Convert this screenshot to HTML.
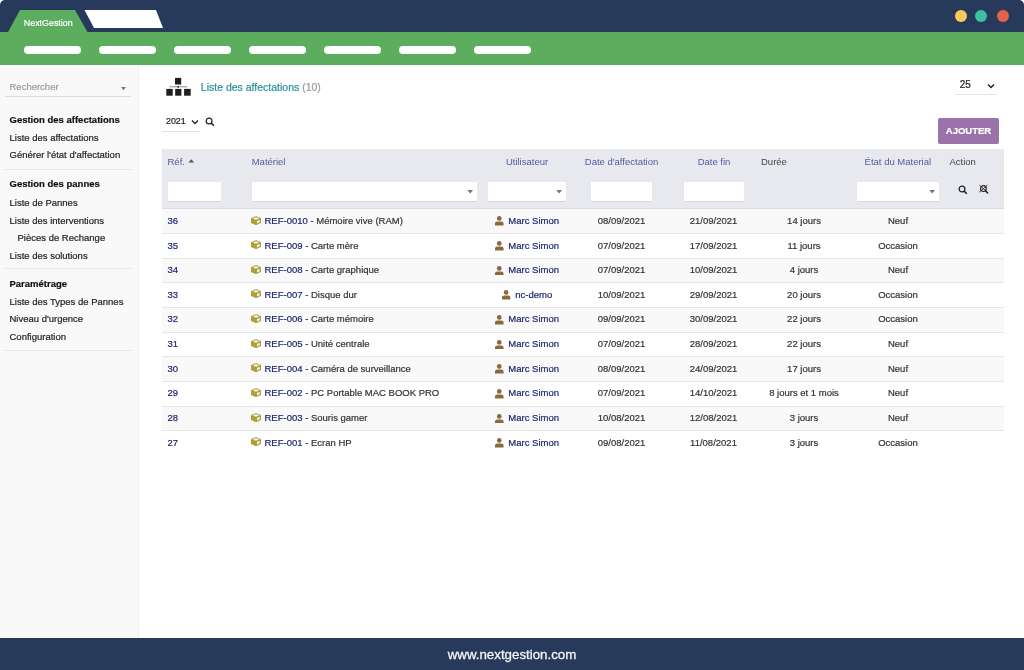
<!DOCTYPE html>
<html><head><meta charset="utf-8">
<style>
*{margin:0;padding:0;box-sizing:border-box}
html,body{width:1024px;height:670px;overflow:hidden;background:#fff}
body{font-family:"Liberation Sans",sans-serif;font-size:9.5px;color:#333;position:relative}
#frame *{-webkit-text-stroke:0.2px currentColor}
.abs{position:absolute}
#frame{position:absolute;left:0;top:0;width:1024px;height:670px;border-radius:5px 5px 0 0;overflow:hidden;background:#fff;will-change:transform}
#top{position:absolute;left:0;top:0;width:1024px;height:33px;background:#273a5c}
#green{position:absolute;left:0;top:32px;width:1024px;height:33px;background:#5cae5e}
.pill{position:absolute;top:46px;height:8px;width:57px;border-radius:4px;background:#fff}
.dot{position:absolute;top:10px;width:12px;height:12px;border-radius:50%}
#side{position:absolute;left:0;top:65px;width:139px;height:573px;background:#f9f9f9;border-right:1px solid #eeeeee}
#side:before{content:"";position:absolute;left:0;top:0;width:138px;height:3px;background:#fff}
#foot{position:absolute;left:0;top:638px;width:1024px;height:32px;background:#273a5c;color:#f4f4f4;font-size:13.3px;font-weight:normal;text-align:center;line-height:34px;-webkit-text-stroke:0.3px #f4f4f4}
.sb{position:absolute;left:9.5px;white-space:nowrap;color:#222}
.sbh{font-weight:bold;color:#111}
.sep{position:absolute;left:5px;width:126px;height:1px;background:#e6e6e6}
table{position:absolute;left:162px;top:149px;width:842px;border-collapse:collapse}
.th{position:absolute;top:149px;left:162px;width:842px;height:60px;background:#e8e9ee;border-bottom:1px solid #dcdde2}
.hl{position:absolute;top:155.7px;color:#535ba0;white-space:nowrap;-webkit-text-stroke:0px currentColor !important}
.inp{position:absolute;top:182px;height:18.6px;background:#fff;box-shadow:0 0.5px 1px rgba(0,0,0,0.08)}
.caret{position:absolute;top:8px;right:3.5px}
.row{position:absolute;left:162px;width:842px;height:24.6px;border-bottom:1px solid #e6e6e6}
.row.odd{background:#f9f9f9}
.row.last{border-bottom:none}
.c{position:absolute;top:5.4px;white-space:nowrap;color:#333}
.ref{color:#1e2670}
.ctr{transform:translateX(-50%)}
</style></head><body>
<div id="frame">
 <div id="top"></div>
 <svg class="abs" style="left:0;top:0" width="200" height="33">
  <polygon points="7.5,33 20,10 75,10 88,33" fill="#5cae5e"/>
  <polygon points="84.5,10 156,10 163,28 94,28" fill="#fff"/>
 </svg>
 <div class="abs" style="left:23.8px;top:17.5px;color:#fff;font-size:8.9px;white-space:nowrap">NextGestion</div>
 <div class="dot" style="left:954.6px;background:#fcc95a"></div>
 <div class="dot" style="left:975.3px;background:#3cbfa3"></div>
 <div class="dot" style="left:996.6px;background:#e9604a"></div>
 <div id="green"></div>
 <div class="pill" style="left:23.5px"></div>
 <div class="pill" style="left:98.5px"></div>
 <div class="pill" style="left:173.5px"></div>
 <div class="pill" style="left:248.5px"></div>
 <div class="pill" style="left:323.5px"></div>
 <div class="pill" style="left:398.5px"></div>
 <div class="pill" style="left:473.5px"></div>

 <div id="side">
  <div class="sb" style="top:16px;color:#9a9a9a">Rechercher</div>
  <svg class="abs" style="left:120.6px;top:21.5px" width="6" height="4" viewBox="0 0 6 4"><polygon points="0,0 5,0 2.5,3.3" fill="#777"/></svg>
  <div class="sep" style="top:31px;background:#dcdcdc"></div>
  <div class="sb sbh" style="top:49px">Gestion des affectations</div>
  <div class="sb" style="top:67px">Liste des affectations</div>
  <div class="sb" style="top:84px">Générer l'état d'affectation</div>
  <div class="sep" style="top:104px"></div>
  <div class="sb sbh" style="top:113px">Gestion des pannes</div>
  <div class="sb" style="top:132px">Liste de Pannes</div>
  <div class="sb" style="top:149.5px">Liste des interventions</div>
  <div class="sb" style="top:166.5px;left:17.5px">Pièces de Rechange</div>
  <div class="sb" style="top:184.5px">Liste des solutions</div>
  <div class="sep" style="top:203px"></div>
  <div class="sb sbh" style="top:213px">Paramétrage</div>
  <div class="sb" style="top:231px">Liste des Types de Pannes</div>
  <div class="sb" style="top:248px">Niveau d'urgence</div>
  <div class="sb" style="top:266px">Configuration</div>
  <div class="sep" style="top:285px"></div>
 </div>

 <!-- content header -->
 <svg class="abs" style="left:165px;top:77px" width="27" height="20" viewBox="0 0 27 20">
  <rect x="10" y="0.9" width="6.2" height="6.6" fill="#1e1e1e"/>
  <rect x="4.4" y="9.3" width="17.8" height="1" fill="#8a8a8a"/>
  <circle cx="13.2" cy="9.8" r="0.9" fill="#222"/>
  <rect x="1.3" y="11.9" width="6.4" height="6.8" fill="#1e1e1e"/>
  <rect x="10.2" y="11.9" width="6.2" height="6.8" fill="#1e1e1e"/>
  <rect x="19.1" y="11.9" width="6.6" height="6.8" fill="#1e1e1e"/>
 </svg>
 <div class="abs" style="left:200.8px;top:81px;font-size:10.5px;color:#27909a;white-space:nowrap">Liste des affectations <span style="color:#999">(10)</span></div>

 <div class="abs" style="left:955px;top:76px;width:41.5px;height:19px;border-bottom:1px solid #e3e3e3">
  <div class="abs" style="left:4.7px;top:3.3px;font-size:10px;color:#222">25</div>
  <svg class="abs" style="left:32px;top:6.5px" width="8" height="6"><polyline points="1,1.5 4,4.5 7,1.5" fill="none" stroke="#222" stroke-width="1.5"/></svg>
 </div>

 <div class="abs" style="left:162px;top:112px;width:38px;height:20px;border-bottom:1px solid #e3e3e3">
  <div class="abs" style="left:4px;top:4.4px;font-size:8.9px;color:#222">2021</div>
  <svg class="abs" style="left:28.8px;top:7.2px" width="8" height="6"><polyline points="1,1.5 4,4.5 7,1.5" fill="none" stroke="#222" stroke-width="1.3"/></svg>
 </div>
 <svg class="abs" style="left:205px;top:117px" width="10" height="10" viewBox="0 0 10 10"><circle cx="4.1" cy="4" r="2.9" fill="none" stroke="#222" stroke-width="1.25"/><line x1="6.2" y1="6.1" x2="8.9" y2="8.8" stroke="#222" stroke-width="1.5"/></svg>

 <div class="abs" style="left:938.2px;top:118px;width:60.6px;height:26px;background:#9b72aa;border-radius:2px;color:#fff;font-weight:bold;font-size:9.5px;text-align:center;line-height:26px">AJOUTER</div>

 <!-- table header -->
 <div class="th"></div>
 <div class="hl" style="left:167.5px">Réf. <svg width="7" height="4" viewBox="0 0 7 4" style="vertical-align:1.5px"><polygon points="0.4,3.6 6.2,3.6 3.3,0.3" fill="#555"/></svg></div>
 <div class="hl" style="left:251.7px">Matériel</div>
 <div class="hl ctr" style="left:527px">Utilisateur</div>
 <div class="hl ctr" style="left:621.5px">Date d'affectation</div>
 <div class="hl ctr" style="left:714px">Date fin</div>
 <div class="hl" style="left:761px;color:#444">Durée</div>
 <div class="hl" style="left:864.6px">État du Material</div>
 <div class="hl" style="left:949.5px;color:#444">Action</div>

 <div class="inp" style="left:167.5px;width:53.5px"></div>
 <div class="inp" style="left:251.5px;width:225.5px"><svg class="caret" width="7" height="4" viewBox="0 0 7 4"><polygon points="0.3,0 6.1,0 3.2,3.6" fill="#777"/></svg></div>
 <div class="inp" style="left:488px;width:78px"><svg class="caret" width="7" height="4" viewBox="0 0 7 4"><polygon points="0.3,0 6.1,0 3.2,3.6" fill="#777"/></svg></div>
 <div class="inp" style="left:591.3px;width:60.7px"></div>
 <div class="inp" style="left:683.6px;width:60.6px"></div>
 <div class="inp" style="left:857px;width:82px"><svg class="caret" width="7" height="4" viewBox="0 0 7 4"><polygon points="0.3,0 6.1,0 3.2,3.6" fill="#777"/></svg></div>
 <svg class="abs" style="left:958px;top:184.5px" width="11" height="10" viewBox="0 0 11 10"><circle cx="4" cy="4" r="2.9" fill="none" stroke="#222" stroke-width="1.25"/><line x1="6.1" y1="6.1" x2="8.8" y2="8.8" stroke="#222" stroke-width="1.5"/></svg>
 <svg class="abs" style="left:978px;top:184px" width="12" height="12" viewBox="0 0 12 12"><circle cx="5.4" cy="4.6" r="2.9" fill="none" stroke="#222" stroke-width="1.2"/><line x1="7.5" y1="6.7" x2="10" y2="9.4" stroke="#222" stroke-width="1.4"/><line x1="1.5" y1="1.2" x2="9.3" y2="8.2" stroke="#222" stroke-width="0.9"/><line x1="9.3" y1="1.2" x2="1.3" y2="8.2" stroke="#222" stroke-width="0.9"/></svg>

 <div id="rows"><div class="row odd" style="top:209.50px;box-shadow:0 -1px 0 #f9f9f9"><div class="c ref" style="left:5.5px">36</div><svg class="abs" style="left:89px;top:6px" width="10" height="9.2" viewBox="0 0 10 9.2"><path d="M5 0 L10 2.2 L10 7 L5 9.2 L0 7 L0 2.2 Z" fill="#ae9f3a"/><path d="M1.8 2.4 L5 1.1 L8.2 2.4 L5 3.8 Z" fill="#f6f3e4"/><path d="M6 4.9 L8.7 3.7 L8.7 6.3 L6 7.6 Z" fill="#f6f3e4"/></svg><div class="c" style="left:102.5px"><span class="ref">REF-0010</span> - Mémoire vive (RAM)</div><div class="c ctr" style="left:365px"><span><svg width="8.6" height="9.6" viewBox="0 0 8.6 9.6" style="vertical-align:-2.2px;margin-right:4.8px"><circle cx="4.3" cy="2.4" r="2.35" fill="#8a6a3c"/><path d="M0 9.6 L0 7.6 Q0 5.6 2.3 5.6 L6.3 5.6 Q8.6 5.6 8.6 7.6 L8.6 9.6 Z" fill="#8a6a3c"/></svg></span><span class="ref">Marc Simon</span></div><div class="c ctr" style="left:459.5px">08/09/2021</div><div class="c ctr" style="left:551.5px">21/09/2021</div><div class="c ctr" style="left:642px">14 jours</div><div class="c ctr" style="left:736px">Neuf</div></div>
<div class="row" style="top:234.15px"><div class="c ref" style="left:5.5px">35</div><svg class="abs" style="left:89px;top:6px" width="10" height="9.2" viewBox="0 0 10 9.2"><path d="M5 0 L10 2.2 L10 7 L5 9.2 L0 7 L0 2.2 Z" fill="#ae9f3a"/><path d="M1.8 2.4 L5 1.1 L8.2 2.4 L5 3.8 Z" fill="#f6f3e4"/><path d="M6 4.9 L8.7 3.7 L8.7 6.3 L6 7.6 Z" fill="#f6f3e4"/></svg><div class="c" style="left:102.5px"><span class="ref">REF-009</span> - Carte mère</div><div class="c ctr" style="left:365px"><span><svg width="8.6" height="9.6" viewBox="0 0 8.6 9.6" style="vertical-align:-2.2px;margin-right:4.8px"><circle cx="4.3" cy="2.4" r="2.35" fill="#8a6a3c"/><path d="M0 9.6 L0 7.6 Q0 5.6 2.3 5.6 L6.3 5.6 Q8.6 5.6 8.6 7.6 L8.6 9.6 Z" fill="#8a6a3c"/></svg></span><span class="ref">Marc Simon</span></div><div class="c ctr" style="left:459.5px">07/09/2021</div><div class="c ctr" style="left:551.5px">17/09/2021</div><div class="c ctr" style="left:642px">11 jours</div><div class="c ctr" style="left:736px">Occasion</div></div>
<div class="row odd" style="top:258.80px"><div class="c ref" style="left:5.5px">34</div><svg class="abs" style="left:89px;top:6px" width="10" height="9.2" viewBox="0 0 10 9.2"><path d="M5 0 L10 2.2 L10 7 L5 9.2 L0 7 L0 2.2 Z" fill="#ae9f3a"/><path d="M1.8 2.4 L5 1.1 L8.2 2.4 L5 3.8 Z" fill="#f6f3e4"/><path d="M6 4.9 L8.7 3.7 L8.7 6.3 L6 7.6 Z" fill="#f6f3e4"/></svg><div class="c" style="left:102.5px"><span class="ref">REF-008</span> - Carte graphique</div><div class="c ctr" style="left:365px"><span><svg width="8.6" height="9.6" viewBox="0 0 8.6 9.6" style="vertical-align:-2.2px;margin-right:4.8px"><circle cx="4.3" cy="2.4" r="2.35" fill="#8a6a3c"/><path d="M0 9.6 L0 7.6 Q0 5.6 2.3 5.6 L6.3 5.6 Q8.6 5.6 8.6 7.6 L8.6 9.6 Z" fill="#8a6a3c"/></svg></span><span class="ref">Marc Simon</span></div><div class="c ctr" style="left:459.5px">07/09/2021</div><div class="c ctr" style="left:551.5px">10/09/2021</div><div class="c ctr" style="left:642px">4 jours</div><div class="c ctr" style="left:736px">Neuf</div></div>
<div class="row" style="top:283.45px"><div class="c ref" style="left:5.5px">33</div><svg class="abs" style="left:89px;top:6px" width="10" height="9.2" viewBox="0 0 10 9.2"><path d="M5 0 L10 2.2 L10 7 L5 9.2 L0 7 L0 2.2 Z" fill="#ae9f3a"/><path d="M1.8 2.4 L5 1.1 L8.2 2.4 L5 3.8 Z" fill="#f6f3e4"/><path d="M6 4.9 L8.7 3.7 L8.7 6.3 L6 7.6 Z" fill="#f6f3e4"/></svg><div class="c" style="left:102.5px"><span class="ref">REF-007</span> - Disque dur</div><div class="c ctr" style="left:365px"><span><svg width="8.6" height="9.6" viewBox="0 0 8.6 9.6" style="vertical-align:-2.2px;margin-right:4.8px"><circle cx="4.3" cy="2.4" r="2.35" fill="#8a6a3c"/><path d="M0 9.6 L0 7.6 Q0 5.6 2.3 5.6 L6.3 5.6 Q8.6 5.6 8.6 7.6 L8.6 9.6 Z" fill="#8a6a3c"/></svg></span><span class="ref">nc-demo</span></div><div class="c ctr" style="left:459.5px">10/09/2021</div><div class="c ctr" style="left:551.5px">29/09/2021</div><div class="c ctr" style="left:642px">20 jours</div><div class="c ctr" style="left:736px">Occasion</div></div>
<div class="row odd" style="top:308.10px"><div class="c ref" style="left:5.5px">32</div><svg class="abs" style="left:89px;top:6px" width="10" height="9.2" viewBox="0 0 10 9.2"><path d="M5 0 L10 2.2 L10 7 L5 9.2 L0 7 L0 2.2 Z" fill="#ae9f3a"/><path d="M1.8 2.4 L5 1.1 L8.2 2.4 L5 3.8 Z" fill="#f6f3e4"/><path d="M6 4.9 L8.7 3.7 L8.7 6.3 L6 7.6 Z" fill="#f6f3e4"/></svg><div class="c" style="left:102.5px"><span class="ref">REF-006</span> - Carte mémoire</div><div class="c ctr" style="left:365px"><span><svg width="8.6" height="9.6" viewBox="0 0 8.6 9.6" style="vertical-align:-2.2px;margin-right:4.8px"><circle cx="4.3" cy="2.4" r="2.35" fill="#8a6a3c"/><path d="M0 9.6 L0 7.6 Q0 5.6 2.3 5.6 L6.3 5.6 Q8.6 5.6 8.6 7.6 L8.6 9.6 Z" fill="#8a6a3c"/></svg></span><span class="ref">Marc Simon</span></div><div class="c ctr" style="left:459.5px">09/09/2021</div><div class="c ctr" style="left:551.5px">30/09/2021</div><div class="c ctr" style="left:642px">22 jours</div><div class="c ctr" style="left:736px">Occasion</div></div>
<div class="row" style="top:332.75px"><div class="c ref" style="left:5.5px">31</div><svg class="abs" style="left:89px;top:6px" width="10" height="9.2" viewBox="0 0 10 9.2"><path d="M5 0 L10 2.2 L10 7 L5 9.2 L0 7 L0 2.2 Z" fill="#ae9f3a"/><path d="M1.8 2.4 L5 1.1 L8.2 2.4 L5 3.8 Z" fill="#f6f3e4"/><path d="M6 4.9 L8.7 3.7 L8.7 6.3 L6 7.6 Z" fill="#f6f3e4"/></svg><div class="c" style="left:102.5px"><span class="ref">REF-005</span> - Unité centrale</div><div class="c ctr" style="left:365px"><span><svg width="8.6" height="9.6" viewBox="0 0 8.6 9.6" style="vertical-align:-2.2px;margin-right:4.8px"><circle cx="4.3" cy="2.4" r="2.35" fill="#8a6a3c"/><path d="M0 9.6 L0 7.6 Q0 5.6 2.3 5.6 L6.3 5.6 Q8.6 5.6 8.6 7.6 L8.6 9.6 Z" fill="#8a6a3c"/></svg></span><span class="ref">Marc Simon</span></div><div class="c ctr" style="left:459.5px">07/09/2021</div><div class="c ctr" style="left:551.5px">28/09/2021</div><div class="c ctr" style="left:642px">22 jours</div><div class="c ctr" style="left:736px">Neuf</div></div>
<div class="row odd" style="top:357.40px"><div class="c ref" style="left:5.5px">30</div><svg class="abs" style="left:89px;top:6px" width="10" height="9.2" viewBox="0 0 10 9.2"><path d="M5 0 L10 2.2 L10 7 L5 9.2 L0 7 L0 2.2 Z" fill="#ae9f3a"/><path d="M1.8 2.4 L5 1.1 L8.2 2.4 L5 3.8 Z" fill="#f6f3e4"/><path d="M6 4.9 L8.7 3.7 L8.7 6.3 L6 7.6 Z" fill="#f6f3e4"/></svg><div class="c" style="left:102.5px"><span class="ref">REF-004</span> - Caméra de surveillance</div><div class="c ctr" style="left:365px"><span><svg width="8.6" height="9.6" viewBox="0 0 8.6 9.6" style="vertical-align:-2.2px;margin-right:4.8px"><circle cx="4.3" cy="2.4" r="2.35" fill="#8a6a3c"/><path d="M0 9.6 L0 7.6 Q0 5.6 2.3 5.6 L6.3 5.6 Q8.6 5.6 8.6 7.6 L8.6 9.6 Z" fill="#8a6a3c"/></svg></span><span class="ref">Marc Simon</span></div><div class="c ctr" style="left:459.5px">08/09/2021</div><div class="c ctr" style="left:551.5px">24/09/2021</div><div class="c ctr" style="left:642px">17 jours</div><div class="c ctr" style="left:736px">Neuf</div></div>
<div class="row" style="top:382.05px"><div class="c ref" style="left:5.5px">29</div><svg class="abs" style="left:89px;top:6px" width="10" height="9.2" viewBox="0 0 10 9.2"><path d="M5 0 L10 2.2 L10 7 L5 9.2 L0 7 L0 2.2 Z" fill="#ae9f3a"/><path d="M1.8 2.4 L5 1.1 L8.2 2.4 L5 3.8 Z" fill="#f6f3e4"/><path d="M6 4.9 L8.7 3.7 L8.7 6.3 L6 7.6 Z" fill="#f6f3e4"/></svg><div class="c" style="left:102.5px"><span class="ref">REF-002</span> - PC Portable MAC BOOK PRO</div><div class="c ctr" style="left:365px"><span><svg width="8.6" height="9.6" viewBox="0 0 8.6 9.6" style="vertical-align:-2.2px;margin-right:4.8px"><circle cx="4.3" cy="2.4" r="2.35" fill="#8a6a3c"/><path d="M0 9.6 L0 7.6 Q0 5.6 2.3 5.6 L6.3 5.6 Q8.6 5.6 8.6 7.6 L8.6 9.6 Z" fill="#8a6a3c"/></svg></span><span class="ref">Marc Simon</span></div><div class="c ctr" style="left:459.5px">07/09/2021</div><div class="c ctr" style="left:551.5px">14/10/2021</div><div class="c ctr" style="left:642px">8 jours et 1 mois</div><div class="c ctr" style="left:736px">Neuf</div></div>
<div class="row odd" style="top:406.70px"><div class="c ref" style="left:5.5px">28</div><svg class="abs" style="left:89px;top:6px" width="10" height="9.2" viewBox="0 0 10 9.2"><path d="M5 0 L10 2.2 L10 7 L5 9.2 L0 7 L0 2.2 Z" fill="#ae9f3a"/><path d="M1.8 2.4 L5 1.1 L8.2 2.4 L5 3.8 Z" fill="#f6f3e4"/><path d="M6 4.9 L8.7 3.7 L8.7 6.3 L6 7.6 Z" fill="#f6f3e4"/></svg><div class="c" style="left:102.5px"><span class="ref">REF-003</span> - Souris gamer</div><div class="c ctr" style="left:365px"><span><svg width="8.6" height="9.6" viewBox="0 0 8.6 9.6" style="vertical-align:-2.2px;margin-right:4.8px"><circle cx="4.3" cy="2.4" r="2.35" fill="#8a6a3c"/><path d="M0 9.6 L0 7.6 Q0 5.6 2.3 5.6 L6.3 5.6 Q8.6 5.6 8.6 7.6 L8.6 9.6 Z" fill="#8a6a3c"/></svg></span><span class="ref">Marc Simon</span></div><div class="c ctr" style="left:459.5px">10/08/2021</div><div class="c ctr" style="left:551.5px">12/08/2021</div><div class="c ctr" style="left:642px">3 jours</div><div class="c ctr" style="left:736px">Neuf</div></div>
<div class="row last" style="top:431.35px"><div class="c ref" style="left:5.5px">27</div><svg class="abs" style="left:89px;top:6px" width="10" height="9.2" viewBox="0 0 10 9.2"><path d="M5 0 L10 2.2 L10 7 L5 9.2 L0 7 L0 2.2 Z" fill="#ae9f3a"/><path d="M1.8 2.4 L5 1.1 L8.2 2.4 L5 3.8 Z" fill="#f6f3e4"/><path d="M6 4.9 L8.7 3.7 L8.7 6.3 L6 7.6 Z" fill="#f6f3e4"/></svg><div class="c" style="left:102.5px"><span class="ref">REF-001</span> - Ecran HP</div><div class="c ctr" style="left:365px"><span><svg width="8.6" height="9.6" viewBox="0 0 8.6 9.6" style="vertical-align:-2.2px;margin-right:4.8px"><circle cx="4.3" cy="2.4" r="2.35" fill="#8a6a3c"/><path d="M0 9.6 L0 7.6 Q0 5.6 2.3 5.6 L6.3 5.6 Q8.6 5.6 8.6 7.6 L8.6 9.6 Z" fill="#8a6a3c"/></svg></span><span class="ref">Marc Simon</span></div><div class="c ctr" style="left:459.5px">09/08/2021</div><div class="c ctr" style="left:551.5px">11/08/2021</div><div class="c ctr" style="left:642px">3 jours</div><div class="c ctr" style="left:736px">Occasion</div></div></div><!--/rows-->
 <div id="foot">www.nextgestion.com</div>
</div>
</body></html>
